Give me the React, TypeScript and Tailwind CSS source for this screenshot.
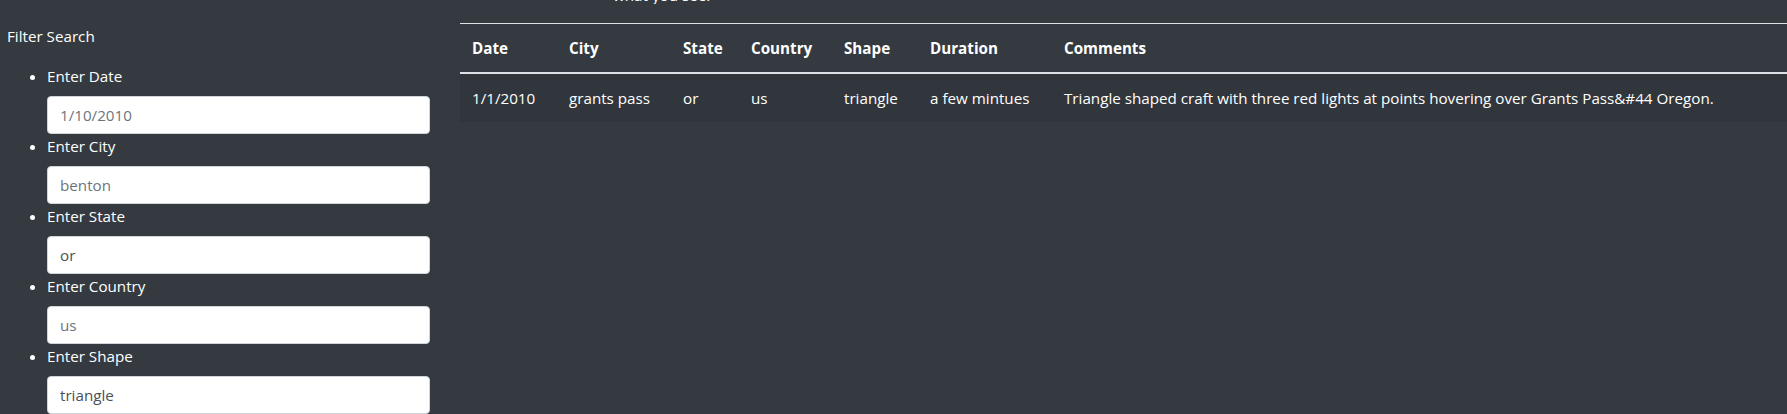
const filters = [
  { label: 'Enter Date', value: '1/10/2010', placeholder: true },
  { label: 'Enter City', value: 'benton', placeholder: true },
  { label: 'Enter State', value: 'or', placeholder: false },
  { label: 'Enter Country', value: 'us', placeholder: true },
  { label: 'Enter Shape', value: 'triangle', placeholder: false },
];

const columns = [
  { name: 'Date', w: 'w-[97px]' },
  { name: 'City', w: 'w-[114px]' },
  { name: 'State', w: 'w-[68px]' },
  { name: 'Country', w: 'w-[93px]' },
  { name: 'Shape', w: 'w-[86px]' },
  { name: 'Duration', w: 'w-[134px]' },
  { name: 'Comments', w: '' },
];

const rows = [
  [
    '1/1/2010',
    'grants pass',
    'or',
    'us',
    'triangle',
    'a few mintues',
    'Triangle shaped craft with three red lights at points hovering over Grants Pass&#44 Oregon.',
  ],
];

export default function App() {
  return (
    <div className="h-[414px] w-full bg-[#343a40] text-white text-[15.2px] leading-6 font-['Open_Sans',sans-serif] flex overflow-hidden">
      {/* filter sidebar */}
      <aside className="w-[460px] shrink-0 pl-[7px] pr-[30px] pt-[24px]">
        <div>Filter Search</div>
        <ul className="list-disc pl-10 mt-4">
          {filters.map((f) => (
            <li key={f.label}>
              <label className="block mb-2">{f.label}</label>
              <input
                type="text"
                {...(f.placeholder ? { placeholder: f.value } : { defaultValue: f.value })}
                className="block w-full h-[38px] px-3 rounded bg-white border border-[#ced4da] text-[#495057] placeholder:text-[#6c757d] outline-none"
              />
            </li>
          ))}
        </ul>
      </aside>

      {/* results */}
      <main className="flex-1 min-w-0">
        <div className="h-[4px] overflow-hidden pl-[153px]">
          <div className="-mt-[17px] leading-6">what you see.</div>
        </div>
        <table className="w-full mt-[19px] border-collapse table-fixed">
          <thead>
            <tr className="border-t border-[#dee2e6]">
              {columns.map((c) => (
                <th key={c.name} className={`${c.w} text-left font-bold p-3 border-b-2 border-[#dee2e6]`}>
                  {c.name}
                </th>
              ))}
            </tr>
          </thead>
          <tbody>
            {rows.map((r, i) => (
              <tr key={i} className="bg-[#31363c]">
                {r.map((cell, j) => (
                  <td key={j} className="p-3 whitespace-nowrap">
                    {cell}
                  </td>
                ))}
              </tr>
            ))}
          </tbody>
        </table>
      </main>
    </div>
  );
}
